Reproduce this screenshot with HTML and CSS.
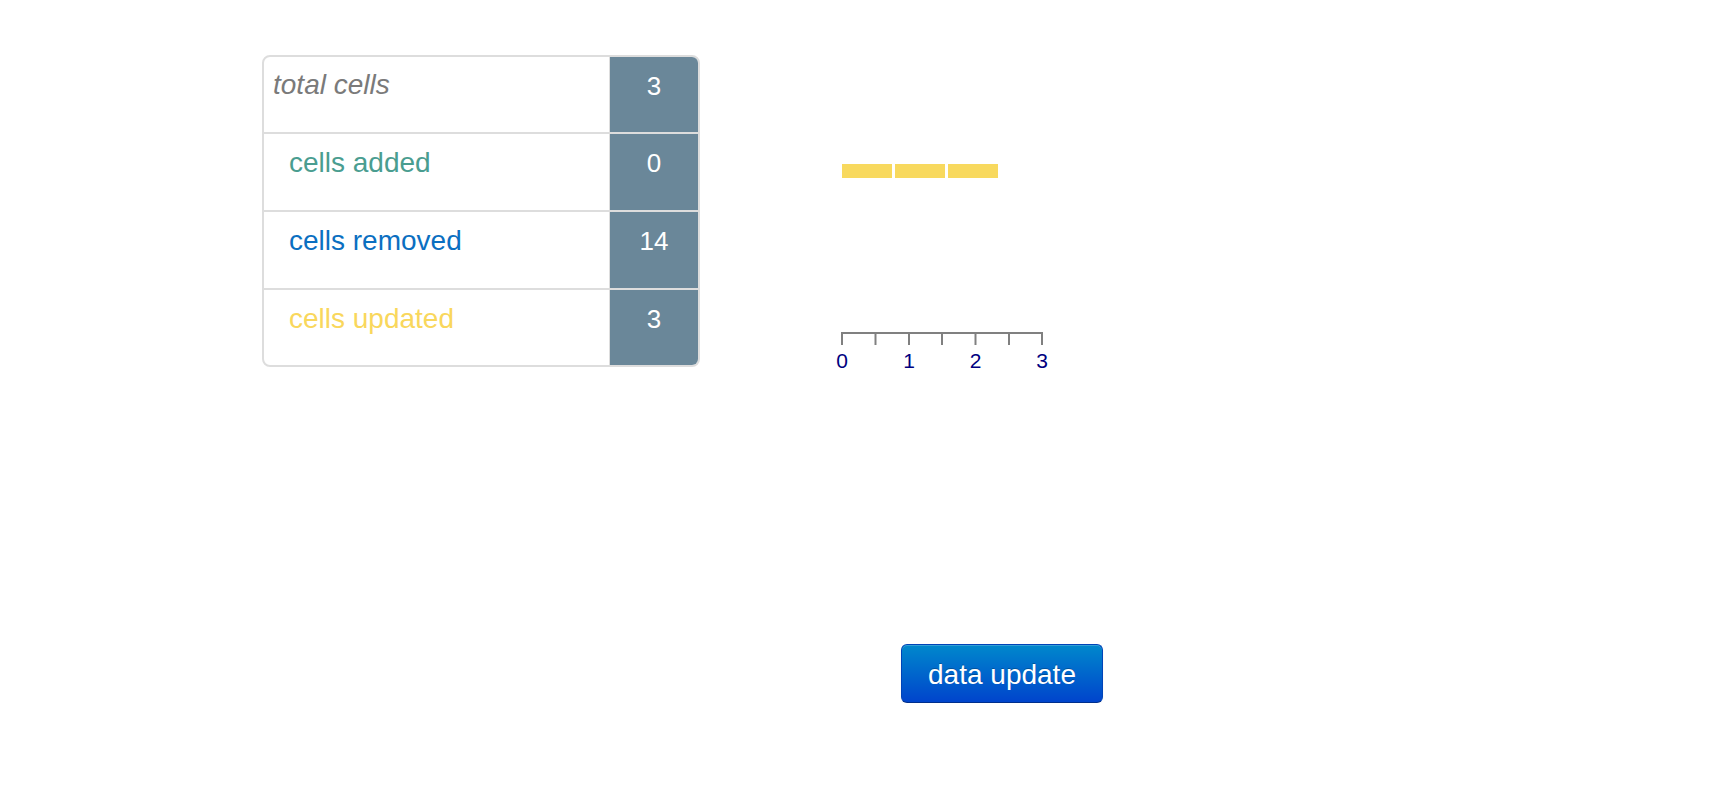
FILE: index.html
```html
<!DOCTYPE html>
<html lang="en">
<head>
<meta charset="utf-8">
<title>Cells summary</title>
<link rel="stylesheet" href="styles.css">
</head>
<body>
<div class="page">
  <div class="top">
    <div class="summary">
      <div class="row row-first">
        <div class="label label-total">total cells</div>
        <div class="value">3</div>
      </div>
      <div class="row">
        <div class="label label-added">cells added</div>
        <div class="value">0</div>
      </div>
      <div class="row">
        <div class="label label-removed">cells removed</div>
        <div class="value">14</div>
      </div>
      <div class="row row-last">
        <div class="label label-updated">cells updated</div>
        <div class="value">3</div>
      </div>
    </div>
    <svg class="chart" width="270" height="312" viewBox="0 0 270 312">
      <g class="bars">
        <rect x="42" y="109" width="50" height="14"></rect>
        <rect x="95" y="109" width="50" height="14"></rect>
        <rect x="148" y="109" width="50" height="14"></rect>
      </g>
      <g class="axis">
        <line x1="41" y1="278" x2="243" y2="278"></line>
        <line x1="42" y1="277" x2="42" y2="290"></line>
        <line x1="75.5" y1="277" x2="75.5" y2="290"></line>
        <line x1="109" y1="277" x2="109" y2="290"></line>
        <line x1="142" y1="277" x2="142" y2="290"></line>
        <line x1="175.5" y1="277" x2="175.5" y2="290"></line>
        <line x1="209" y1="277" x2="209" y2="290"></line>
        <line x1="242" y1="277" x2="242" y2="290"></line>
      </g>
      <g class="axis-labels">
        <text x="42" y="313">0</text>
        <text x="109" y="313">1</text>
        <text x="175.5" y="313">2</text>
        <text x="242" y="313">3</text>
      </g>
    </svg>
  </div>
  <div class="actions">
    <button class="btn-update" type="button">data update</button>
  </div>
</div>
</body>
</html>
```

FILE: styles.css
```css
html, body {
  margin: 0;
  padding: 0;
  background: #ffffff;
}

body {
  font-family: "Liberation Sans", Arial, Helvetica, sans-serif;
}

.page {
  padding: 55px 0 0 262px;
}

.top {
  display: flex;
  align-items: flex-start;
}

.summary {
  width: 438px;
  box-sizing: border-box;
  border: 2px solid #dddddd;
  border-radius: 8px;
  overflow: hidden;
  display: flex;
  flex-direction: column;
}

.row {
  display: flex;
  height: 76px;
  border-bottom: 2px solid #dddddd;
}

.row-first {
  height: 75px;
}

.row-last {
  height: 75px;
  border-bottom: none;
}

.label {
  flex: 1;
  box-sizing: border-box;
  padding: 13px 0 0 25px;
  font-size: 28px;
  line-height: 32px;
  border-right: 1px solid #dddddd;
}

.label-total {
  padding-top: 12px;
  padding-left: 9px;
  font-style: italic;
  color: #7a7a7a;
}

.label-added {
  color: #4a9d90;
}

.label-removed {
  color: #0b6fc1;
}

.label-updated {
  color: #f9d75c;
}

.value {
  width: 88px;
  box-sizing: border-box;
  padding-top: 13px;
  background: #6a8799;
  color: #ffffff;
  font-size: 26px;
  line-height: 32px;
  text-align: center;
}

.chart {
  display: block;
  margin-left: 100px;
  overflow: visible;
}

.bars rect {
  fill: #f8d95e;
}

.axis line {
  stroke: #808080;
  stroke-width: 2;
}

.axis-labels text {
  font-family: "Liberation Sans", Arial, sans-serif;
  font-size: 21px;
  fill: #000080;
  text-anchor: middle;
}

.actions {
  margin-top: 277px;
  padding-left: 639px;
}

.btn-update {
  display: block;
  width: 202px;
  height: 59px;
  box-sizing: border-box;
  padding: 2px 0 0;
  border: 1px solid #0044b8;
  border-bottom-color: #002f8c;
  border-radius: 6px;
  background: linear-gradient(to bottom, #0088cc, #0044cc);
  color: #ffffff;
  font-family: "Liberation Sans", Arial, sans-serif;
  font-size: 28px;
  text-shadow: 0 -1px 0 rgba(0, 0, 0, 0.25);
  box-shadow: inset 0 1px 0 rgba(255, 255, 255, 0.2), 0 1px 2px rgba(0, 0, 0, 0.05);
  cursor: pointer;
}
```
